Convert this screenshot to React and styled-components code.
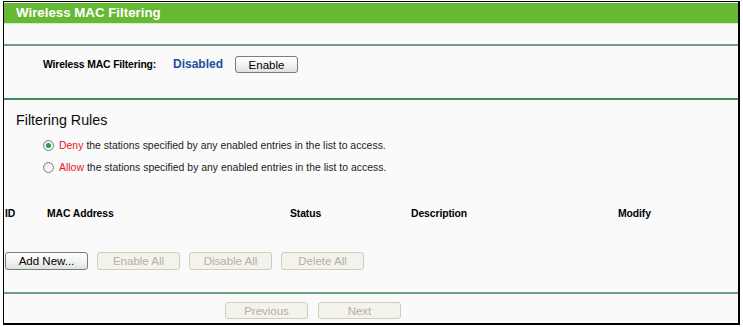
import React from 'react'
import styled, { createGlobalStyle } from 'styled-components'

const Global = createGlobalStyle`
    body {
        margin: 0;
        background: #fff;
        font-family: 'Liberation Sans', Arial, sans-serif;
        font-size: 11px;
        color: #000;
    }
`

const Frame = styled.div`
    box-sizing: border-box;
    width: 737px;
    height: 324px;
    margin: 1px 0 0 3px;
    border: 1px solid #000;
    border-right-width: 2px;
    border-bottom-width: 2px;
    padding-top: 1px;
    background: #fafafa;
    display: flex;
    flex-direction: column;
`

const Header = styled.div`
    height: 20px;
    background: #66b933;
    border-bottom: 1px solid #d9edc9;
    color: #fff;
    font-weight: bold;
    font-size: 13.3px;
    line-height: 20px;
    padding-left: 12px;
`

const Rule = styled.div`
    height: 2px;
    flex: none;
    background: ${p => p.dark ? '#3f8a5e' : '#6e9f84'};
`

const Spacer = styled.div`
    height: ${p => p.h}px;
    flex: none;
`

const StatusRow = styled.div`
    height: 52px;
    flex: none;
    display: flex;
    align-items: flex-start;
    padding: 10px 0 0 39px;
    box-sizing: border-box;
`

const Label = styled.span`
    font-weight: bold;
    font-size: 10.4px;
    letter-spacing: -0.15px;
    width: 130px;
    line-height: 17px;
`

const StatusValue = styled.span`
    font-weight: bold;
    font-size: 12px;
    color: #1d4f9c;
    width: 62px;
    line-height: 17px;
`

const Button = styled.button`
    box-sizing: border-box;
    height: ${p => p.h || 18}px;
    width: ${p => p.w || 83}px;
    padding: 0;
    font-family: 'Liberation Sans', Arial, sans-serif;
    font-size: 11.5px;
    border-radius: 3px;
    color: ${p => p.disabled ? '#b3b0a2' : '#000'};
    border: 1px solid ${p => p.disabled ? '#cfcdbf' : '#6f7f92'};
    background: ${p => p.disabled ? '#f3f3ec' : 'linear-gradient(#ffffff, #f0f0ec 60%, #e2e2dc)'};
`

const Section = styled.div`
    flex: 1;
    display: flex;
    flex-direction: column;
`

const Title = styled.div`
    font-size: 14.3px;
    line-height: 17px;
    padding: 12px 0 0 12px;
    color: #0a0a0a;
`

const Options = styled.div`
    display: flex;
    flex-direction: column;
    padding: 5px 0 0 39px;
`

const Option = styled.label`
    display: flex;
    align-items: center;
    height: 22px;
    font-size: 10.45px;
    color: #222;
`

const Radio = styled.span`
    box-sizing: border-box;
    width: 11px;
    height: 11px;
    border-radius: 50%;
    border: 1px solid #6f7f92;
    background: linear-gradient(135deg, #e8e8e2, #fff);
    margin-right: 5px;
    display: flex;
    align-items: center;
    justify-content: center;
    &::after {
        content: '';
        width: 5px;
        height: 5px;
        border-radius: 50%;
        background: ${p => p.checked ? '#2f9a36' : 'transparent'};
    }
`

const Keyword = styled.span`
    color: #e8151c;
    margin-right: 3px;
`

const TableHead = styled.div`
    display: grid;
    grid-template-columns: 42px 243px 121px 207px 1fr;
    margin-top: 29px;
    padding-left: 1px;
    font-weight: bold;
    font-size: 10.4px;
    letter-spacing: -0.1px;
    line-height: 14px;
`

const ButtonRow = styled.div`
    display: flex;
    gap: 9px;
    margin-top: 31px;
    padding-left: 1px;
`

const Footer = styled.div`
    height: 29px;
    flex: none;
    display: flex;
    gap: 10px;
    padding: 8px 0 0 221px;
    box-sizing: border-box;
`

export default function App() {
    return (
        <>
            <Global />
            <Frame>
                <Header>Wireless MAC Filtering</Header>
                <Spacer h={20} />
                <Rule />
                <StatusRow>
                    <Label>Wireless MAC Filtering:</Label>
                    <StatusValue>Disabled</StatusValue>
                    <Button w={63} h={17}>Enable</Button>
                </StatusRow>
                <Rule dark />
                <Section>
                    <Title>Filtering Rules</Title>
                    <Options>
                        <Option><Radio checked /><Keyword>Deny</Keyword>the stations specified by any enabled entries in the list to access.</Option>
                        <Option><Radio /><Keyword>Allow</Keyword>the stations specified by any enabled entries in the list to access.</Option>
                    </Options>
                    <TableHead>
                        <span>ID</span>
                        <span>MAC Address</span>
                        <span>Status</span>
                        <span>Description</span>
                        <span>Modify</span>
                    </TableHead>
                    <ButtonRow>
                        <Button>Add New...</Button>
                        <Button disabled>Enable All</Button>
                        <Button disabled>Disable All</Button>
                        <Button disabled>Delete All</Button>
                    </ButtonRow>
                </Section>
                <Rule />
                <Footer>
                    <Button disabled h={17}>Previous</Button>
                    <Button disabled h={17}>Next</Button>
                </Footer>
            </Frame>
        </>
    )
}
